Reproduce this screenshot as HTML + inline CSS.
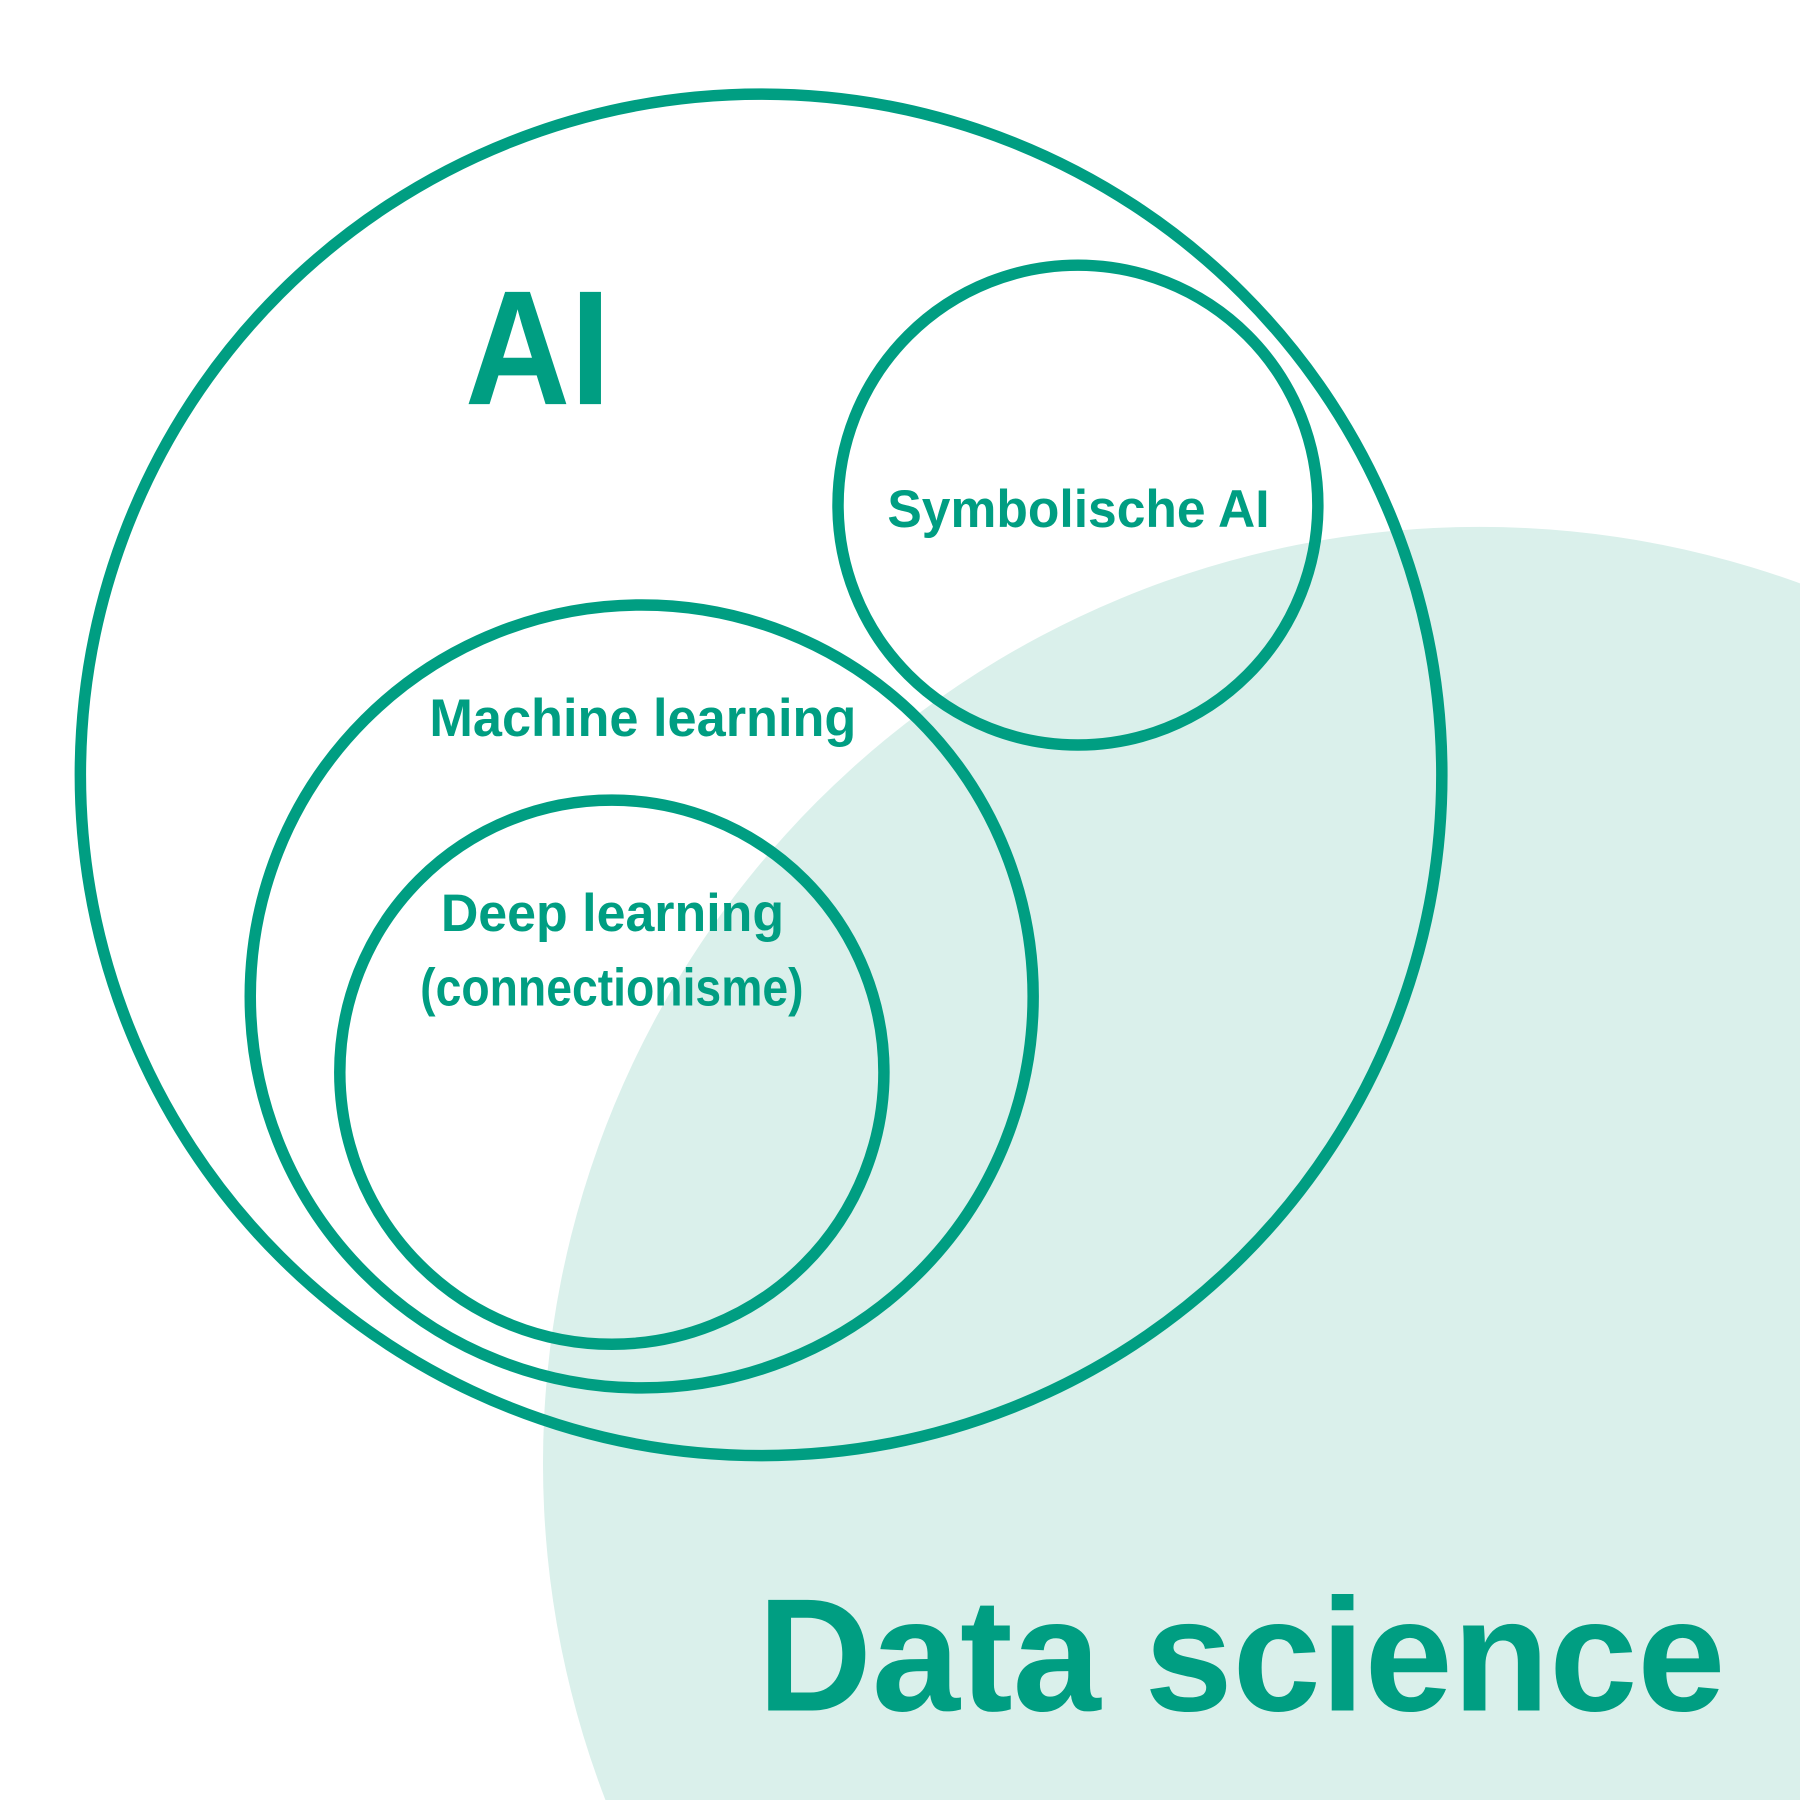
<!DOCTYPE html>
<html><head><meta charset="utf-8"><style>
html,body{margin:0;padding:0;background:#fff;width:1800px;height:1800px;overflow:hidden}
svg{display:block;overflow:hidden}
text{font-family:"Liberation Sans","DejaVu Sans",sans-serif;font-weight:bold;fill:#009e82}
</style></head><body>
<svg width="1800" height="1800" viewBox="0 0 1568 1568" xmlns="http://www.w3.org/2000/svg">
<rect width="1568" height="1568" fill="#fff"/>
<circle cx="1289" cy="1275" r="816" fill="#daf0eb"/>
<g fill="none" stroke="#009e82" stroke-width="10">
<circle cx="663" cy="675" r="593"/>
<circle cx="939" cy="440" r="209"/>
<circle cx="559" cy="868" r="341"/>
<circle cx="533" cy="934" r="237"/>
</g>
<text x="405" y="352" font-size="142" textLength="127" lengthAdjust="spacingAndGlyphs">AI</text>
<text x="773" y="459" font-size="46" textLength="333" lengthAdjust="spacingAndGlyphs">Symbolische AI</text>
<text x="374" y="641" font-size="46" textLength="372" lengthAdjust="spacingAndGlyphs">Machine learning</text>
<text x="384" y="811" font-size="46" textLength="299" lengthAdjust="spacingAndGlyphs">Deep learning</text>
<text x="366" y="876" font-size="46" textLength="334" lengthAdjust="spacingAndGlyphs">(connectionisme)</text>
<text x="660" y="1490" font-size="140" textLength="843" lengthAdjust="spacingAndGlyphs">Data science</text>
</svg>
</body></html>
